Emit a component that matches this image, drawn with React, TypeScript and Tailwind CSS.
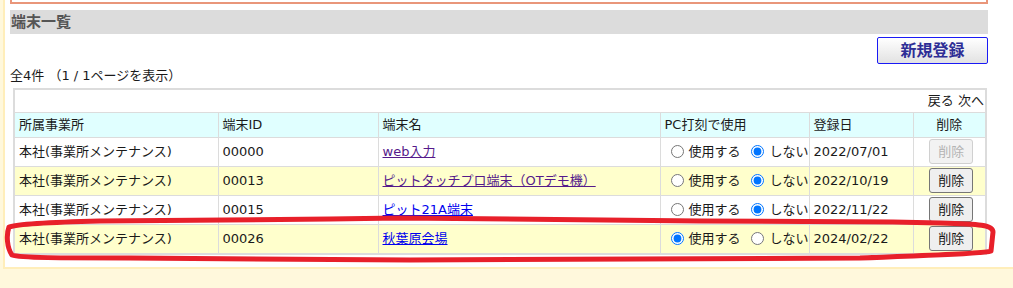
import React from "react";

type Row = {
  office: string;
  id: string;
  name: string;
  visited: boolean;
  use: boolean;
  date: string;
  locked?: boolean;
};

const rows: Row[] = [
  { office: "本社(事業所メンテナンス)", id: "00000", name: "web入力", visited: true, use: false, date: "2022/07/01", locked: true },
  { office: "本社(事業所メンテナンス)", id: "00013", name: "ピットタッチプロ端末（OTデモ機）", visited: true, use: false, date: "2022/10/19" },
  { office: "本社(事業所メンテナンス)", id: "00015", name: "ピット21A端末", visited: false, use: false, date: "2022/11/22" },
  { office: "本社(事業所メンテナンス)", id: "00026", name: "秋葉原会場", visited: false, use: true, date: "2024/02/22" },
];

const TerminalList = () => {
  return (
    <div className="relative min-h-screen bg-[#fff8dc] pl-[3px] text-[13px] text-[#1a1a1a] font-['DejaVu_Sans','Noto_Sans_CJK_JP',sans-serif]">
      <div className="border-l-2 border-b-2 border-[#ffeeba] bg-white pl-[5px] pr-[25px] pb-[12px]">
        {/* box from the section above, cut off by the screenshot */}
        <div className="h-[4px] border-x-2 border-b-2 border-[#e9967a]" />

        <div className="mt-[6px] h-[24px] bg-[#dcdcdc] pl-[1px] text-[15px] font-bold leading-[24px] text-[#555]">
          端末一覧
        </div>

        <div className="mt-[3px] flex justify-end">
          <button className="h-[27px] w-[111px] rounded-[2px] border border-[#1a1af5] bg-gradient-to-b from-white to-[#e2e2e2] text-[16px] font-bold text-[#2e2e96]">
            新規登録
          </button>
        </div>

        <div className="mt-[2px] h-[22px] leading-[20px]">全4件 （1 / 1ページを表示）</div>

        <div className="ml-[3px] mr-px border-2 border-[#dcdcdc]">
          <div className="flex h-[23px] items-center justify-end border-b border-[#dcdcdc] pr-[1px]">
            戻る 次へ
          </div>
          <table className="w-full table-fixed border-collapse border-hidden">
            <colgroup>
              <col className="w-[203px]" />
              <col className="w-[160px]" />
              <col className="w-[282px]" />
              <col className="w-[149px]" />
              <col className="w-[104px]" />
              <col className="w-[72px]" />
            </colgroup>
            <thead>
              <tr className="h-[24px] bg-[#e0ffff] text-left">
                <th className="border border-[#dcdcdc] px-[4px] font-normal">所属事業所</th>
                <th className="border border-[#dcdcdc] px-[4px] font-normal">端末ID</th>
                <th className="border border-[#dcdcdc] px-[4px] font-normal">端末名</th>
                <th className="border border-[#dcdcdc] px-[4px] font-normal">PC打刻で使用</th>
                <th className="border border-[#dcdcdc] px-[4px] font-normal">登録日</th>
                <th className="border border-[#dcdcdc] px-[4px] text-center font-normal">削除</th>
              </tr>
            </thead>
            <tbody>
              {rows.map((r, i) => (
                <tr key={r.id} className={i % 2 === 1 ? "h-[29px] bg-[#ffffcc]" : "h-[29px] bg-white"}>
                  <td className="whitespace-nowrap border border-[#dcdcdc] px-[4px]">{r.office}</td>
                  <td className="border border-[#dcdcdc] px-[4px]">{r.id}</td>
                  <td className="whitespace-nowrap border border-[#dcdcdc] px-[4px]">
                    <a href="#" className={r.visited ? "text-[#551a8b] underline" : "text-[#0000ee] underline"}>
                      {r.name}
                    </a>
                  </td>
                  <td className="border border-[#dcdcdc] p-0">
                    <div className="flex items-center overflow-hidden whitespace-nowrap">
                      <input type="radio" name={"pc" + r.id} defaultChecked={r.use} className="ml-[10px] h-[13px] w-[13px]" />
                      <span className="ml-[5px]">使用する</span>
                      <input type="radio" name={"pc" + r.id} defaultChecked={!r.use} className="ml-[10px] h-[13px] w-[13px]" />
                      <span className="ml-[6px]">しない</span>
                    </div>
                  </td>
                  <td className="border border-[#dcdcdc] px-[4px]">{r.date}</td>
                  <td className="border border-[#dcdcdc] pl-[4px] text-center">
                    <button
                      disabled={r.locked}
                      className={
                        r.locked
                          ? "h-[25px] w-[44px] rounded-[3px] border border-[#d0d0d0] bg-[#f2f2f2] text-[#b4b4b4]"
                          : "h-[25px] w-[44px] rounded-[3px] border border-[#767676] bg-[#efefef]"
                      }
                    >
                      削除
                    </button>
                  </td>
                </tr>
              ))}
            </tbody>
          </table>
        </div>
      </div>

      {/* red hand-drawn mark around the last row */}
      <svg className="pointer-events-none absolute left-0 top-0" width="1013" height="288">
        <path
          d="M 100 221 Q 20 223 9 227 C 6 235 7 248 12 255 C 20 258 60 258 130 258 L 410 260 L 860 258 C 930 255 985 254 991 251 L 993 232 C 993 225 980 224 940 223 L 893 222 L 700 221 L 400 218 L 330 219 L 100 221 Z"
          fill="none"
          stroke="#e8202a"
          strokeWidth="5"
          strokeLinejoin="round"
        />
      </svg>
    </div>
  );
};

export default TerminalList;
